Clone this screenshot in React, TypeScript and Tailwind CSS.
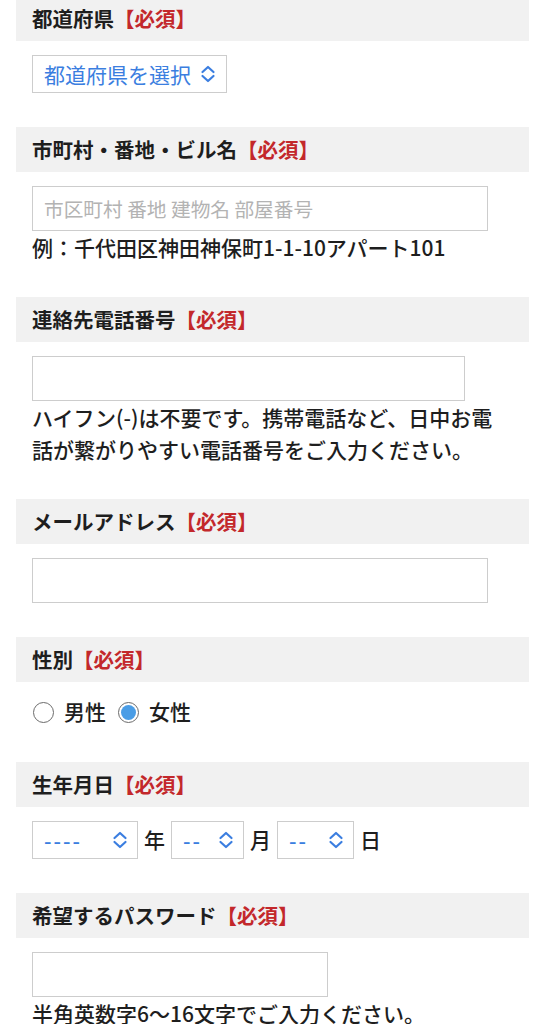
import React from 'react';

const font = { fontFamily: '"Noto Sans CJK JP", "Noto Sans", sans-serif' };

const Chevron: React.FC = () => (
  <svg width="16" height="18" viewBox="0 0 16 18" fill="none" className="shrink-0">
    <path d="M2.5 7 L8 2 L13.5 7" stroke="#3b7ee0" strokeWidth="2.2" strokeLinecap="round" strokeLinejoin="round" />
    <path d="M2.5 11 L8 16 L13.5 11" stroke="#3b7ee0" strokeWidth="2.2" strokeLinecap="round" strokeLinejoin="round" />
  </svg>
);

const Heading: React.FC<{ label: string }> = ({ label }) => (
  <div className="h-[45px] flex items-center px-4 bg-[#f1f1f1] text-[20.5px] font-bold text-[#1e1e1e]">
    {label}
    <span className="text-[#c3282b]">【必須】</span>
  </div>
);

const Section: React.FC<{ label: string; children: React.ReactNode }> = ({ label, children }) => (
  <section className="mb-[34px]">
    <Heading label={label} />
    <div className="px-4 pt-[14px]">{children}</div>
  </section>
);

const SelectBox: React.FC<{ text: string; width: string; gap?: string; dash?: boolean }> = ({ text, width, gap = 'justify-between', dash }) => (
  <div className={`h-[38px] ${width} ${gap} border border-[#cdcdcd] bg-white flex items-center pl-[11px] pr-[9px] text-[21px] text-[#3b7ee0]`}>
    <span className={`leading-none ${dash ? 'tracking-[2px]' : ''}`}>{text}</span>
    <Chevron />
  </div>
);

const TextInput: React.FC<{ width: string; placeholder?: string }> = ({ width, placeholder }) => (
  <div className={`h-[45px] ${width} border border-[#cdcdcd] bg-white flex items-center px-[11px] text-[19.7px] text-[#b3b3b3]`}>
    {placeholder}
  </div>
);

const Radio: React.FC<{ checked?: boolean }> = ({ checked }) => (
  <span className="w-[21px] h-[21px] rounded-full border-[1.5px] border-[#6b6b6b] bg-white flex items-center justify-center">
    {checked && <span className="w-[15px] h-[15px] rounded-full bg-[#4a9de6]" />}
  </span>
);

export default function App() {
  return (
    <div className="bg-white min-h-screen px-4 -mt-[4px] text-[#1e1e1e]" style={font}>
      <Section label="都道府県">
        <SelectBox text="都道府県を選択" width="w-[195px]" gap="gap-[9px]" />
      </Section>

      <Section label="市町村・番地・ビル名">
        <TextInput width="w-[456px]" placeholder="市区町村 番地 建物名 部屋番号" />
        <p className="text-[21px] leading-[32px] font-medium">例：千代田区神田神保町1-1-10アパート101</p>
      </Section>

      <Section label="連絡先電話番号">
        <TextInput width="w-[433px]" />
        <p className="text-[21px] leading-[32px] font-medium">
          ハイフン(-)は不要です。携帯電話など、日中お電話が繋がりやすい電話番号をご入力ください。
        </p>
      </Section>

      <Section label="メールアドレス">
        <TextInput width="w-[456px]" />
      </Section>

      <Section label="性別">
        <div className="h-[32px] flex items-center text-[21px] font-medium">
          <label className="flex items-center gap-[10px] ml-px mr-[12px]">
            <Radio />
            <span>男性</span>
          </label>
          <label className="flex items-center gap-[10px]">
            <Radio checked />
            <span>女性</span>
          </label>
        </div>
      </Section>

      <Section label="生年月日">
        <div className="flex items-center gap-[6px] text-[21px] font-medium">
          <SelectBox text="----" width="w-[106px]" dash />
          <span>年</span>
          <SelectBox text="--" width="w-[73px]" dash />
          <span>月</span>
          <SelectBox text="--" width="w-[77px]" dash />
          <span>日</span>
        </div>
      </Section>

      <Section label="希望するパスワード">
        <TextInput width="w-[296px]" />
        <p className="text-[21px] leading-[32px] font-medium">半角英数字6〜16文字でご入力ください。</p>
      </Section>
    </div>
  );
}
